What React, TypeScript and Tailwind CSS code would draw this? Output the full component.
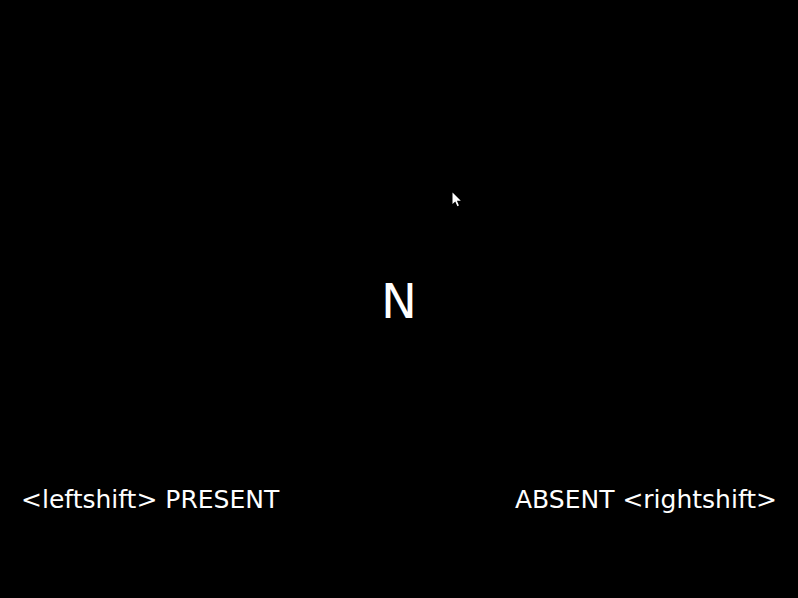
export default function App() {
  return (
    <div className="relative h-[598px] w-full overflow-hidden bg-black text-white font-['DejaVu_Sans',sans-serif]">
      <div className="flex flex-col pt-[277px]">
        <div className="flex justify-center text-[48px] leading-none">N</div>
        <div className="mt-[162px] flex justify-between px-[21px] text-[25px] leading-none">
          <span>&lt;leftshift&gt; PRESENT</span>
          <span>ABSENT &lt;rightshift&gt;</span>
        </div>
      </div>

      {/* mouse pointer */}
      <svg
        className="absolute left-[452px] top-[192px]"
        width="10"
        height="16"
        viewBox="0 0 10 16"
      >
        <path d="M0.5 0.5 L0.5 12 L3.3 9.4 L5.4 14.2 L6.9 13.5 L4.9 8.8 L8.8 8.8 Z" fill="#fff" />
      </svg>
    </div>
  );
}
